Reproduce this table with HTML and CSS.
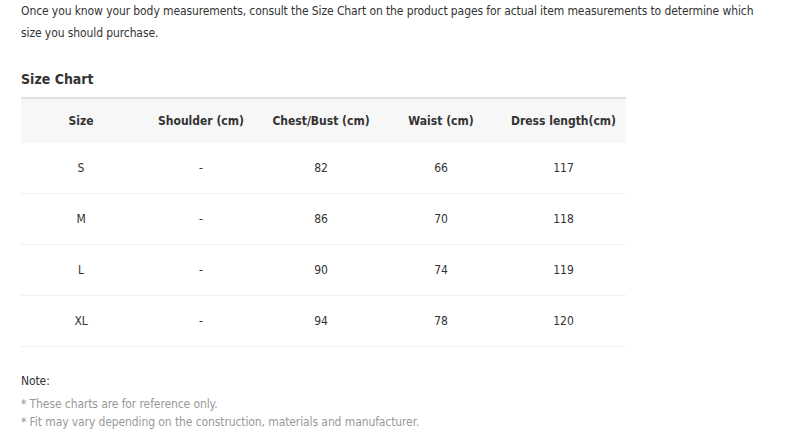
FILE: index.html
```html
<!DOCTYPE html>
<html>
<head>
<meta charset="utf-8">
<link rel="stylesheet" href="styles.css">
</head>
<body>
<div class="page">
  <p class="intro">Once you know your body measurements, consult the Size Chart on the product pages for actual item measurements to determine which size you should purchase.</p>
  <h2 class="title">Size Chart</h2>
  <table class="chart">
    <thead>
      <tr><th class="c1">Size</th><th class="c2">Shoulder (cm)</th><th class="c3">Chest/Bust (cm)</th><th class="c4">Waist (cm)</th><th class="c5">Dress length(cm)</th></tr>
    </thead>
    <tbody>
      <tr><td>S</td><td>-</td><td>82</td><td>66</td><td>117</td></tr>
      <tr><td>M</td><td>-</td><td>86</td><td>70</td><td>118</td></tr>
      <tr><td>L</td><td>-</td><td>90</td><td>74</td><td>119</td></tr>
      <tr><td>XL</td><td>-</td><td>94</td><td>78</td><td>120</td></tr>
    </tbody>
  </table>
  <div class="notes">
    <div class="note-head">Note:</div>
    <div class="note">* These charts are for reference only.</div>
    <div class="note">* Fit may vary depending on the construction, materials and manufacturer.</div>
  </div>
</div>
</body>
</html>
```

FILE: styles.css
```css
html, body {
  margin: 0;
  padding: 0;
  background: #fff;
}
body {
  font-family: "DejaVu Sans Condensed", "DejaVu Sans", Verdana, sans-serif;
  font-size: 12px;
  letter-spacing: -0.1px;
  color: #333;
}
.page {
  padding: 0 0 0 21px;
}
.intro {
  margin: 0;
  padding-top: 0;
  line-height: 22px;
  width: 736px;
}
.title {
  margin: 24px 0 0 0;
  font-size: 14px;
  font-weight: bold;
  line-height: 22px;
  letter-spacing: 0;
  color: #333;
}
.chart {
  margin-top: 7px;
  width: 605px;
  border-collapse: collapse;
  border-top: 2px solid #e2e2e2;
  table-layout: fixed;
}
.chart th {
  background: #f7f7f7;
  height: 44px;
  padding: 0;
  font-weight: bold;
  letter-spacing: 0;
  color: #333;
  text-align: center;
}
.chart td {
  height: 50px;
  padding: 0;
  text-align: center;
  border-bottom: 1px solid #f0f0f0;
  color: #333;
}
.c1, .c2, .c3, .c4 { width: 120px; }
.c5 { width: 125px; }
.notes {
  margin-top: 25px;
  line-height: 18px;
}
.note-head {
  color: #333;
  margin-bottom: 5px;
}
.note {
  color: #999;
}
```
